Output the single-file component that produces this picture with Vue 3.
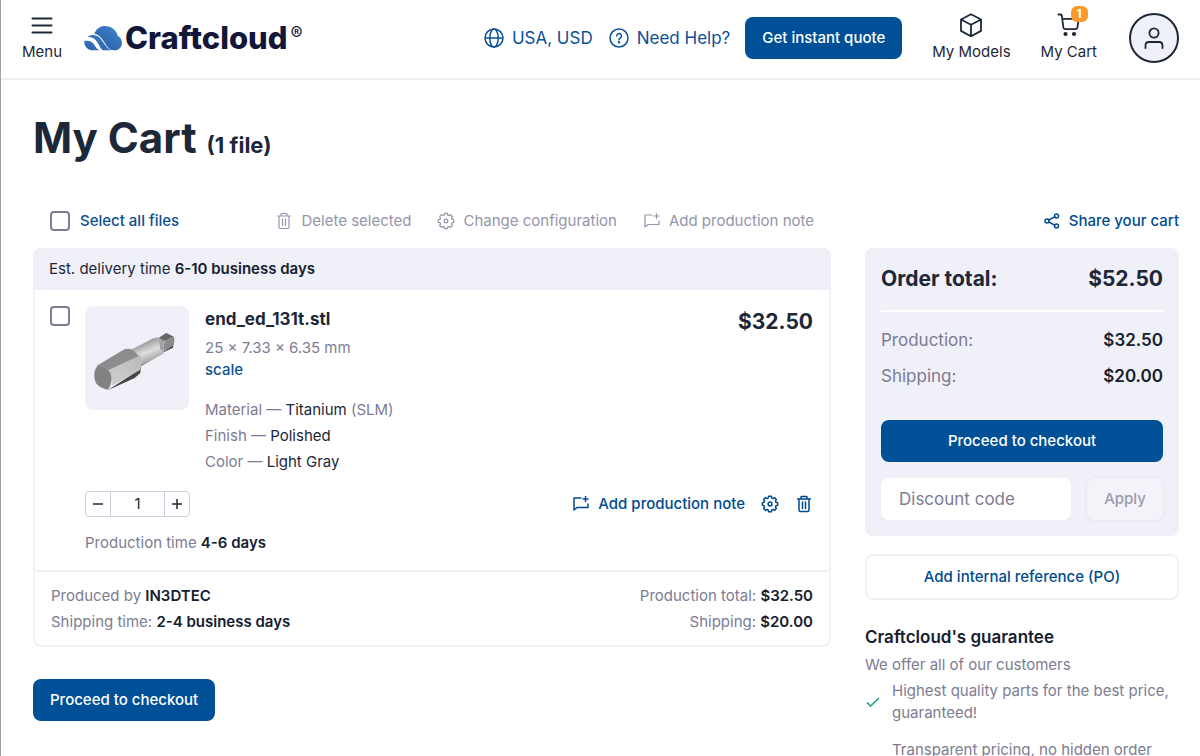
<template>
  <div class="page">
    <header class="topbar">
      <button class="nav-item menu" type="button">
        <svg width="24" height="24" viewBox="0 0 24 24" fill="none" stroke="currentColor" stroke-width="2" stroke-linecap="round">
          <path d="M2.5 5.5h19M2.500 12.500h19M2.500 19.500h19" />
        </svg>
        <span>Menu</span>
      </button>

      <a class="logo" href="#">
        <svg width="38" height="25" viewBox="0 0 114 75">
          <defs>
            <linearGradient id="cloud" x1="0" y1="1" x2="1" y2="0">
              <stop offset="0" stop-color="#2b4fa2" />
              <stop offset="1" stop-color="#3d8ed0" />
            </linearGradient>
          </defs>
          <path fill="url(#cloud)" d="M31 23C37 8 49 0 63 0c18 0 34 12 38 29 8 4 13 12 13 21 0 14-10 23-24 23-10 0-15-5-22-14C58 44 49 26 31 23Z" />
          <path fill="url(#cloud)" d="M11 32c9-7 26-8 36 3 11 12 19 30 35 38H57C46 65 42 42 25 35c-5-2-9-3-14-3Z" />
          <path fill="url(#cloud)" d="M1 45c15-3 26 3 31 13 3 7 8 12 14 15H25C10 72 0 60 1 45Z" />
        </svg>
        <span class="logo-name">Craftcloud</span>
        <span class="logo-mark">®</span>
      </a>

      <nav class="nav">
        <div class="nav-links">
          <a class="nav-link" href="#">
            <svg width="22" height="22" viewBox="0 0 22 22" fill="none" stroke="currentColor" stroke-width="1.5">
              <circle cx="11" cy="11" r="9" />
              <ellipse cx="11" cy="11" rx="4.2" ry="9" />
              <path d="M2 11h18" />
            </svg>
            <span>USA, USD</span>
          </a>
          <a class="nav-link" href="#">
            <svg width="22" height="22" viewBox="0 0 22 22" fill="none" stroke="currentColor" stroke-width="1.5" stroke-linecap="round">
              <circle cx="11" cy="11" r="9" />
              <path d="M8.7 9a2.4 2.4 0 1 1 3.6 2.1c-.9.5-1.3.9-1.3 1.6" />
              <circle cx="11" cy="15.3" r=".5" fill="currentColor" />
            </svg>
            <span>Need Help?</span>
          </a>
          <button class="btn" type="button">Get instant quote</button>
        </div>
        <a class="nav-item models" href="#">
          <svg width="24" height="24" viewBox="0 0 24 24" fill="none" stroke="currentColor" stroke-width="1.8" stroke-linejoin="round">
            <path d="M12 1.3l10 5.2v11.4l-10 5.4-10-5.4V6.5zM2 6.5l10 5.3 10-5.3M12 11.8v11.5" />
          </svg>
          <span>My Models</span>
        </a>
        <a class="nav-item cart" href="#">
          <svg width="24" height="24" viewBox="0 0 24 24" fill="none" stroke="currentColor" stroke-width="1.8" stroke-linecap="round" stroke-linejoin="round">
            <path d="M1.5 1.5h2.2c.6 0 1 .4 1.1 1l1.6 12c.1 1 .9 1.6 1.8 1.6h10.2c1 0 1.8-.7 2-1.6l1.3-8.7H5.3" />
            <circle cx="8.5" cy="21" r="1.2" fill="currentColor" />
            <circle cx="17" cy="21" r="1.2" fill="currentColor" />
          </svg>
          <span class="badge">1</span>
          <span>My Cart</span>
        </a>
        <button class="avatar" type="button" aria-label="Account">
          <svg width="24" height="24" viewBox="0 0 24 24" fill="none" stroke="currentColor" stroke-width="1.8" stroke-linecap="round">
            <circle cx="12" cy="7" r="4.6" />
            <path d="M3.5 22v-2.5c0-2 1.4-3.5 3.5-3.5h10c2.1 0 3.5 1.5 3.5 3.5V22" />
          </svg>
        </button>
      </nav>
    </header>

    <main class="content">
      <h1>My Cart <small>(1 file)</small></h1>

      <div class="columns">
        <section>
          <div class="toolbar">
            <label class="select-all">
              <input v-model="allSelected" class="check" type="checkbox">
              <span>Select all files</span>
            </label>
            <div class="bulk">
              <button v-for="action in bulkActions" :key="action.icon" class="action" type="button" :disabled="!allSelected">
                <svg width="18" height="18" viewBox="0 0 18 18" class="line-icon"><path :d="icons[action.icon]" /></svg>
                <span>{{ action.label }}</span>
              </button>
            </div>
          </div>

          <article class="card">
            <div class="card-head">Est. delivery time <b>6-10 business days</b></div>

            <div class="item">
              <input v-model="allSelected" class="check" type="checkbox" aria-label="end_ed_131t.stl">
              <div class="item-main">
                <div class="item-top">
                  <svg class="thumb" width="104" height="104" viewBox="0 0 312 312">
                    <defs>
                      <linearGradient id="shaft" x1="0" y1="0" x2=".5" y2="1">
                        <stop offset="0" stop-color="#6f6f6f" />
                        <stop offset=".3" stop-color="#9d9d9d" />
                        <stop offset=".6" stop-color="#dedede" />
                        <stop offset=".85" stop-color="#aaa" />
                        <stop offset="1" stop-color="#4c4c4c" />
                      </linearGradient>
                      <linearGradient id="side" x1="0" y1="1" x2="1" y2="0">
                        <stop offset="0" stop-color="#d0d0d0" />
                        <stop offset="1" stop-color="#b9b9b9" />
                      </linearGradient>
                    </defs>
                    <path fill="url(#shaft)" d="M135 133l70-36c12-5 26-3 31 6 6 11 7 28-2 40l-68 39-26-6z" />
                    <path fill="#a2a2a2" d="M222 95l20-13 24 10-29 14-4 30-8-8z" />
                    <path fill="#666" d="M222 95l22-14 22 11-27 13z" />
                    <path fill="#8b8b8b" d="M240 105l27-13c2 9 1 18-1 26l-29 17c-3-9-1-21 3-30z" />
                    <path fill="#454545" d="M234 138l31-20-1 7-27 13z" />
                    <path fill="#474747" d="M68 253l93-60 7-12-2 20-17 15z" />
                    <path fill="#8d8d8d" d="M34 180l84-50c12-4 25 0 31 7l18 18-94 38z" />
                    <path fill="url(#side)" d="M69 193l98-46c3 12 3 28-1 44l-86 49c4-18 1-35-11-47z" />
                    <path fill="#818181" stroke="#b0b0b0" stroke-width="1" d="M28 205c0-12 5-21 11-25 13 0 24 5 33 14 9 12 10 29 4 43-2 7-5 11-8 14-13-3-26-9-34-18-4-7-6-17-6-28z" />
                  </svg>
                  <div class="info">
                    <h2>end_ed_131t.stl</h2>
                    <p class="dims">25 × 7.33 × 6.35 mm</p>
                    <a class="scale" href="#">scale</a>
                    <ul class="specs">
                      <li v-for="spec in specs" :key="spec.name">
                        {{ spec.name }} — <span class="dark">{{ spec.value }}</span> {{ spec.note }}
                      </li>
                    </ul>
                  </div>
                  <strong class="price">$32.50</strong>
                </div>

                <div class="item-controls">
                  <div class="qty">
                    <button type="button" aria-label="Decrease" @click="quantity > 1 && quantity--">
                      <svg width="12" height="12" viewBox="0 0 12 12"><path d="M1 6h10" /></svg>
                    </button>
                    <input v-model.number="quantity" type="text" aria-label="Quantity">
                    <button type="button" aria-label="Increase" @click="quantity++">
                      <svg width="12" height="12" viewBox="0 0 12 12"><path d="M1 6h10M6 1v10" /></svg>
                    </button>
                  </div>
                  <div class="item-actions">
                    <button class="action" type="button">
                      <svg width="18" height="18" viewBox="0 0 18 18" class="line-icon bold"><path :d="icons.note" /></svg>
                      <span>Add production note</span>
                    </button>
                    <button class="action" type="button" aria-label="Change configuration">
                      <svg width="18" height="18" viewBox="0 0 18 18" class="line-icon bold"><path :d="icons.gear" /></svg>
                    </button>
                    <button class="action" type="button" aria-label="Delete">
                      <svg width="18" height="18" viewBox="0 0 18 18" class="line-icon bold"><path :d="icons.trash" /></svg>
                    </button>
                  </div>
                </div>
                <p class="production">Production time <b>4-6 days</b></p>
              </div>
            </div>

            <div class="card-foot">
              <div>
                <p>Produced by <b>IN3DTEC</b></p>
                <p>Shipping time: <b>2-4 business days</b></p>
              </div>
              <div class="right">
                <p>Production total: <b>$32.50</b></p>
                <p>Shipping: <b>$20.00</b></p>
              </div>
            </div>
          </article>

          <button class="btn" type="button">Proceed to checkout</button>
        </section>

        <aside>
          <div class="share">
            <a class="action" href="#">
              <svg width="18" height="18" viewBox="0 0 18 18" class="line-icon bold">
                <circle cx="4" cy="9" r="2" />
                <circle cx="13.5" cy="4" r="2" />
                <circle cx="13.5" cy="14" r="2" />
                <path d="M5.8 8l6-3.1M5.8 10l6 3.1" />
              </svg>
              <span>Share your cart</span>
            </a>
          </div>

          <div class="summary">
            <div class="total"><span>Order total:</span><span>$52.50</span></div>
            <div v-for="row in costs" :key="row.label" class="cost">
              <span>{{ row.label }}</span><b>{{ row.value }}</b>
            </div>
            <button class="btn wide" type="button">Proceed to checkout</button>
            <form class="discount" @submit.prevent>
              <input v-model="code" type="text" placeholder="Discount code" aria-label="Discount code">
              <button type="submit" :disabled="!code">Apply</button>
            </form>
          </div>

          <button class="reference" type="button">Add internal reference (PO)</button>

          <div class="guarantee">
            <h3>Craftcloud's guarantee</h3>
            <p>We offer all of our customers</p>
            <ul>
              <li v-for="text in guarantees" :key="text">
                <svg width="16" height="16" viewBox="0 0 16 16"><path d="M2 8.5l3.6 3.5L14 4" /></svg>
                <span>{{ text }}</span>
              </li>
            </ul>
          </div>
        </aside>
      </div>
    </main>
  </div>
</template>

<script setup>
import { ref } from 'vue'

const allSelected = ref(false)
const quantity = ref(1)
const code = ref('')

const icons = {
  trash: 'M2.5 4h13M6 4V2.2c0-.5.3-.7.7-.7h4.6c.4 0 .7.2.7.7V4M4 4v11c0 .9.6 1.5 1.5 1.5h7c.9 0 1.5-.6 1.5-1.5V4M7.5 7v6.5M10.5 7v6.5',
  gear: 'M16.7 7.65v2.7l-1.8.45-.45 1.2.95 1.5-1.9 1.9-1.5-.95-1.2.45-.45 1.8h-2.7l-.45-1.8-1.2-.45-1.5.95-1.9-1.9.95-1.5-.45-1.2-1.8-.45v-2.7l1.8-.45.45-1.2-.95-1.5 1.9-1.9 1.5.95 1.2-.45.45-1.8h2.7l.45 1.8 1.2.45 1.5-.95 1.9 1.9-.95 1.5.45 1.2zM10.9 9a1.9 1.9 0 1 1-3.8 0a1.9 1.9 0 0 1 3.8 0',
  note: 'M9 3H2v12l3-2.5h11V9M13.5 1.5v5M11 4h5',
}

const bulkActions = [
  { icon: 'trash', label: 'Delete selected' },
  { icon: 'gear', label: 'Change configuration' },
  { icon: 'note', label: 'Add production note' },
]

const specs = [
  { name: 'Material', value: 'Titanium', note: '(SLM)' },
  { name: 'Finish', value: 'Polished' },
  { name: 'Color', value: 'Light Gray' },
]

const costs = [
  { label: 'Production:', value: '$32.50' },
  { label: 'Shipping:', value: '$20.00' },
]

const guarantees = [
  'Highest quality parts for the best price, guaranteed!',
  'Transparent pricing, no hidden order fees',
]
</script>

<style>
body {
  margin: 0;
  background: #fff;
}
</style>

<style scoped>
.page {
  border-left: 1px solid #a3a3a5;
  color: #1c2738;
  font-family: Inter, 'Liberation Sans', sans-serif;
  font-size: 15px;
  line-height: 22px;
}

h1, h2, h3, p, ul {
  margin: 0;
  padding: 0;
}
ul { list-style: none; }
b { color: #15202f; font-weight: 600; }
a { color: inherit; text-decoration: none; }
button, input {
  box-sizing: border-box;
  margin: 0;
  font: inherit;
  color: inherit;
}
button {
  padding: 0;
  border: 0;
  background: none;
}
svg { flex: none; display: block; }

.topbar {
  display: flex;
  align-items: center;
  height: 76px;
  padding: 0 21px 2px;
  border-bottom: 2px solid #efeff6;
}
.nav-item {
  position: relative;
  display: flex;
  flex-direction: column;
  align-items: center;
  gap: 4px;
}
.menu { margin-right: 22px; }

.logo {
  display: flex;
  align-items: center;
  gap: 3px;
  color: #12173a;
}
.logo-name {
  font-size: 31px;
  font-weight: 800;
  line-height: 32px;
}
.logo-mark {
  align-self: flex-start;
  font-size: 18px;
  line-height: 24px;
}

.nav {
  display: flex;
  align-items: center;
  margin-left: auto;
}
.nav-links {
  display: flex;
  align-items: center;
  gap: 15px;
}
.nav-link {
  display: flex;
  align-items: center;
  gap: 7px;
  color: #0b4f97;
  font-size: 17px;
}
.models { margin-left: 30px; }
.cart { margin-left: 30px; }
.badge {
  position: absolute;
  top: -7px;
  left: 30px;
  min-width: 17px;
  border-radius: 6px;
  background: #fb9a2b;
  color: #fff;
  font-size: 12px;
  font-weight: 700;
  line-height: 16px;
  text-align: center;
}
.avatar {
  display: flex;
  align-items: center;
  justify-content: center;
  width: 50px;
  height: 50px;
  margin-left: 32px;
  border: 2px solid #1c2738;
  border-radius: 50%;
  background: #f0f0f9;
}

.btn {
  height: 42px;
  padding: 0 17px;
  border-radius: 8px;
  background: #005098;
  color: #fff;
  font-weight: 500;
}
.btn.wide { width: 100%; }

.content { padding: 32px 21px 0 32px; }
h1 {
  font-size: 42px;
  font-weight: 700;
  line-height: 52px;
}
h1 small {
  font-size: 22px;
  font-weight: 700;
}

.columns {
  display: grid;
  grid-template-columns: minmax(0, 1fr) 314px;
  gap: 34px;
  margin-top: 38px;
}

.toolbar, .share {
  display: flex;
  align-items: center;
  height: 24px;
  margin-bottom: 15px;
}
.toolbar {
  justify-content: space-between;
  padding: 0 17px;
}
.share { justify-content: flex-end; }
.select-all {
  display: flex;
  align-items: center;
  gap: 10px;
  color: #0b4f8f;
  font-weight: 500;
}
.check {
  flex: none;
  appearance: none;
  width: 20px;
  height: 20px;
  border: 2px solid #7c7c94;
  border-radius: 4px;
  background: #fff;
}
.check:checked { background: #005098; }
.bulk {
  display: flex;
  gap: 26px;
}
.action {
  display: flex;
  align-items: center;
  gap: 8px;
  color: #004b8f;
  font-weight: 500;
}
.action:disabled {
  color: #9495a9;
  font-weight: 400;
}
.line-icon {
  fill: none;
  stroke: currentColor;
  stroke-width: 1.2;
  stroke-linecap: round;
  stroke-linejoin: round;
}
.line-icon.bold { stroke-width: 1.5; }

.card {
  margin-bottom: 32px;
  border: 2px solid #f0f0f7;
  border-radius: 8px;
}
.card-head {
  padding: 8px 14px 10px;
  background: #f0f0f9;
}
.item {
  display: flex;
  gap: 15px;
  padding: 16px 16px 16px 15px;
}
.item-main { flex: 1; }
.item-top {
  display: flex;
  gap: 16px;
}
.thumb {
  border-radius: 8px;
  background: #f0f0f9;
}
.info {
  flex: 1;
  color: #7c7c92;
}
h2 {
  color: #1c2738;
  font-size: 17px;
  font-weight: 700;
  line-height: 26px;
}
.dims { margin-top: 5px; }
.scale {
  color: #0b4f8f;
  font-weight: 500;
}
.specs {
  margin-top: 16px;
  line-height: 26px;
}
.dark { color: #1c2738; }
.price {
  font-size: 21px;
  font-weight: 700;
  line-height: 32px;
}
.item-controls {
  display: flex;
  align-items: center;
  justify-content: space-between;
  margin-top: 16px;
}
.qty {
  display: flex;
  box-sizing: border-box;
  width: 105px;
  height: 26px;
  border: 1px solid #cdcde0;
  border-radius: 4px;
}
.qty button {
  display: flex;
  align-items: center;
  justify-content: center;
  width: 24px;
}
.qty svg {
  stroke: #1c2738;
  stroke-width: 1.5;
}
.qty input {
  flex: 1;
  min-width: 0;
  padding: 0;
  border: 1px solid #cdcde0;
  border-width: 0 1px;
  text-align: center;
}
.item-actions {
  display: flex;
  gap: 16px;
}
.production {
  margin-top: 15px;
  color: #7c7c92;
}
.card-foot {
  display: flex;
  justify-content: space-between;
  padding: 11px 16px 10px;
  border-top: 2px solid #f0f0f7;
  color: #7c7c92;
  line-height: 26px;
}
.right { text-align: right; }

.summary {
  padding: 16px;
  border-radius: 8px;
  background: #f0f0f9;
}
.total {
  display: flex;
  justify-content: space-between;
  margin-bottom: 10px;
  padding-bottom: 16px;
  border-bottom: 2px solid #fff;
  font-size: 21px;
  font-weight: 700;
  line-height: 30px;
}
.cost {
  display: flex;
  justify-content: space-between;
  color: #7c7c92;
  font-size: 17px;
  line-height: 36px;
}
.summary .btn { margin-top: 26px; }
.discount {
  display: flex;
  gap: 16px;
  margin-top: 16px;
}
.discount input {
  flex: 1;
  min-width: 0;
  height: 42px;
  padding: 0 18px;
  border: 0;
  border-radius: 8px;
  background: #fff;
  font-size: 17px;
}
.discount input::placeholder { color: #7c7c92; }
.discount button {
  width: 76px;
  border-radius: 8px;
  background: #f3f3f9;
  box-shadow: 0 0 3px #dddde9;
  color: #9a9bae;
  font-weight: 500;
}
.reference {
  width: 100%;
  height: 46px;
  margin-top: 18px;
  border: 2px solid #f0f0f5;
  border-radius: 8px;
  background: #fff;
  color: #004b8f;
  font-weight: 500;
}

.guarantee {
  margin-top: 25px;
  color: #7c7c92;
}
h3 {
  color: #15202f;
  font-size: 17px;
  font-weight: 600;
  line-height: 24px;
}
.guarantee p { margin-top: 5px; }
.guarantee ul {
  display: flex;
  flex-direction: column;
  gap: 15px;
  margin-top: 4px;
}
.guarantee li {
  display: flex;
  align-items: center;
  gap: 11px;
}
.guarantee svg {
  fill: none;
  stroke: #159d88;
  stroke-width: 1.5;
}
</style>
